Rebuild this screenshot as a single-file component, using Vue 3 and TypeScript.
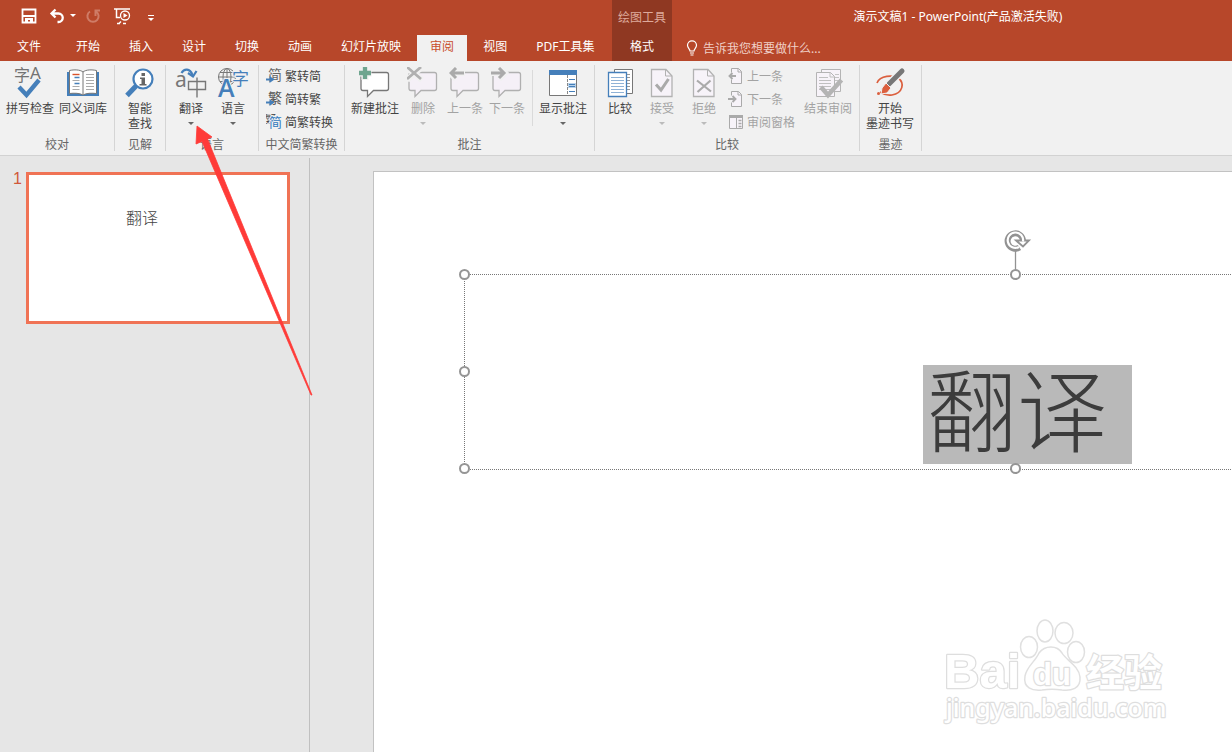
<script setup lang="ts">
import { ref } from 'vue'

interface Command {
  id: string
  lines: string[]
  icon: string
  wide?: boolean
  caret?: boolean
  disabled?: boolean
}

interface SmallCommand {
  id: string
  label: string
  icon: string
  disabled?: boolean
}

interface Group {
  id: string
  title: string
  large: Command[]
  small?: SmallCommand[]
  trailing?: Command[]
  divided?: boolean
}

const tabs: string[] = ['文件', '开始', '插入', '设计', '切换', '动画', '幻灯片放映', '审阅', '视图', 'PDF工具集']
const activeTab = ref('审阅')
const query = ref('')

const groups: Group[] = [
  {
    id: 'proofing',
    title: '校对',
    large: [
      { id: 'spelling', lines: ['拼写检查'], icon: 'spelling', wide: true },
      { id: 'thesaurus', lines: ['同义词库'], icon: 'book', wide: true },
    ],
  },
  { id: 'insights', title: '见解', large: [{ id: 'lookup', lines: ['智能', '查找'], icon: 'lookup' }] },
  {
    id: 'language',
    title: '语言',
    large: [
      { id: 'translate', lines: ['翻译'], icon: 'translate', caret: true },
      { id: 'lang', lines: ['语言'], icon: 'language', caret: true },
    ],
  },
  {
    id: 'chinese',
    title: '中文简繁转换',
    large: [],
    small: [
      { id: 'to-simplified', label: '繁转简', icon: 'simplified' },
      { id: 'to-traditional', label: '简转繁', icon: 'traditional' },
      { id: 'convert', label: '简繁转换', icon: 'convert' },
    ],
  },
  {
    id: 'comments',
    title: '批注',
    large: [
      { id: 'new-comment', lines: ['新建批注'], icon: 'comment-new', wide: true },
      { id: 'delete', lines: ['删除'], icon: 'comment-delete', caret: true, disabled: true },
      { id: 'previous', lines: ['上一条'], icon: 'comment-prev', disabled: true },
      { id: 'next', lines: ['下一条'], icon: 'comment-next', disabled: true },
    ],
    divided: true,
    trailing: [{ id: 'show', lines: ['显示批注'], icon: 'show-comments', wide: true, caret: true }],
  },
  {
    id: 'compare',
    title: '比较',
    large: [
      { id: 'compare-files', lines: ['比较'], icon: 'compare' },
      { id: 'accept', lines: ['接受'], icon: 'accept', caret: true, disabled: true },
      { id: 'reject', lines: ['拒绝'], icon: 'reject', caret: true, disabled: true },
    ],
    small: [
      { id: 'prev-change', label: '上一条', icon: 'page-prev', disabled: true },
      { id: 'next-change', label: '下一条', icon: 'page-next', disabled: true },
      { id: 'pane', label: '审阅窗格', icon: 'pane', disabled: true },
    ],
    trailing: [{ id: 'end-review', lines: ['结束审阅'], icon: 'end-review', wide: true, disabled: true }],
  },
  { id: 'ink', title: '墨迹', large: [{ id: 'start-ink', lines: ['开始', '墨迹书写'], icon: 'ink', wide: true }] },
]

const handles: string[] = ['nw', 'n', 'w', 'sw', 's']
</script>

<template>
  <div class="window">
    <svg class="sprite" aria-hidden="true">
      <defs>
        <symbol id="i-save" viewBox="0 0 16 16">
          <path d="M1.500 1.500h13v13h-13z" fill="none" stroke="#fff" stroke-width="1.800" />
          <path d="M2 8h12" stroke="#fff" stroke-width="2" />
          <path d="M4 15v-5h8v5h-3v-3h-2v3z" fill="#fff" />
        </symbol>
        <symbol id="i-undo" viewBox="0 0 16 16">
          <path d="M6.500 1.500L2.500 5.500l4 4M3 5.500h6.500a4 4 0 0 1 0 8.500h-1" fill="none" stroke="#fff" stroke-width="2.300" />
        </symbol>
        <symbol id="i-redo" viewBox="0 0 16 16">
          <path d="M5 3.500A5.600 5.600 0 1 0 11 3.500M10.500 8V2.500H15" fill="none" stroke="#cf7c67" stroke-width="2" />
        </symbol>
        <symbol id="i-show" viewBox="0 0 18 18">
          <path d="M1 2h16M3.500 2v8.500H7M4 16.500h3M8 14.500l-2 2M10 16.500h3" fill="none" stroke="#fff" stroke-width="1.500" />
          <circle cx="12" cy="8.500" r="4.500" fill="#b7472a" stroke="#fff" stroke-width="1.300" />
          <path d="M10.500 6v5l4-2.500z" fill="#fff" />
        </symbol>
        <symbol id="i-bulb" viewBox="0 0 12 16">
          <path d="M4 11C4 9 1.500 8 1.500 5.300a4.500 4.500 0 0 1 9 0C10.500 8 8 9 8 11zM4 13h4M4.500 15h3" fill="none" stroke="#fff" stroke-width="1.200" />
        </symbol>

        <symbol id="i-spelling" viewBox="0 0 32 32">
          <text x="0" y="14" font-size="16" fill="#737373" font-family="Noto Sans CJK SC, sans-serif">字</text>
          <text x="16" y="12" font-size="17" fill="#737373" font-family="Noto Sans, sans-serif">A</text>
          <path d="M5 20.500l8 8L25.500 13" fill="none" stroke="#f1f1f1" stroke-width="6" />
          <path d="M5 20l7.500 8L25 13" fill="none" stroke="#457fba" stroke-width="4.300" />
        </symbol>
        <symbol id="i-book" viewBox="0 0 32 32">
          <path d="M0 5h32v24H0z" fill="#457fba" />
          <path d="M2.500 3.500C7 2.500 13 2.500 16 5c3-2.500 9-2.500 13.500-1.500v23c-4.500-.5-10.500-.5-13.500 1.500-3-2-9-2-13.500-1.500z" fill="#fff" stroke="#777" />
          <path d="M16 5v22.500" stroke="#777" />
          <path d="M5.500 7.500h7" stroke="#d9532c" stroke-width="1.400" />
          <path d="M7.500 10.500h5M7.500 16.500h5" stroke="#457fba" stroke-width="1.300" />
          <path d="M5.500 13.500h7M5.500 19.500h7M5.500 22.500h7M19 7.500h8M19 10.500h8M19 13.500h8M19 16.500h8M19 19.500h8M19 22.500h8" stroke="#aaa" stroke-width="1.200" />
        </symbol>
        <symbol id="i-lookup" viewBox="0 0 32 32">
          <path d="M12 19L3 28.500" stroke="#457fba" stroke-width="5" />
          <circle cx="19" cy="12" r="9.500" fill="#fff" stroke="#457fba" stroke-width="2.200" />
          <path d="M17.500 6H21v3h-3.500zM16 10.500h5v6.500h1.500v1.500h-7V17h2v-5H16z" fill="#666" />
        </symbol>
        <symbol id="i-translate" viewBox="0 0 32 32">
          <text x="0" y="20" font-size="21" fill="#777" font-family="Noto Sans, sans-serif">a</text>
          <path d="M6.500 6C9 1.500 15 1 17.500 8" fill="none" stroke="#457fba" stroke-width="2.200" />
          <path d="M13 6l5 3.500L21.500 4" fill="none" stroke="#457fba" stroke-width="2.200" />
          <path d="M13.500 14.500h17v8h-17zM22 10.500v20" fill="none" stroke="#777" stroke-width="1.400" />
        </symbol>
        <symbol id="i-language" viewBox="0 0 32 32">
          <g fill="none" stroke="#777">
            <circle cx="10" cy="10" r="8.500" />
            <ellipse cx="10" cy="10" rx="4" ry="8.500" />
            <path d="M10 1.500v17M1.500 10h17M3 5.500h14M3 14.500h14" />
          </g>
          <text x="15" y="18" font-size="17" fill="#457fba" stroke="#f1f1f1" stroke-width="2" paint-order="stroke" font-family="Noto Sans CJK SC, sans-serif">字</text>
          <text x="1" y="30" font-size="25" font-weight="600" fill="#457fba" stroke="#f1f1f1" stroke-width="2" paint-order="stroke" font-family="Open Sans, sans-serif">A</text>
        </symbol>

        <symbol id="i-simplified" viewBox="0 0 16 16">
          <text x="2" y="12" font-size="14" fill="#666" font-family="Noto Sans CJK SC, sans-serif">简</text>
          <path d="M0 11.500h5" stroke="#457fba" stroke-width="2" />
          <path d="M3.500 8l5 3.500-5 3.500z" fill="#457fba" />
        </symbol>
        <symbol id="i-traditional" viewBox="0 0 16 16">
          <text x="2" y="12" font-size="14" fill="#555" font-family="Noto Sans CJK SC, sans-serif">繁</text>
          <path d="M0 11.500h5" stroke="#457fba" stroke-width="2" />
          <path d="M3.500 8l5 3.500-5 3.500z" fill="#457fba" />
        </symbol>
        <symbol id="i-convert" viewBox="0 0 16 16">
          <text x="-1" y="9" font-size="11" fill="#444" font-family="Noto Sans CJK SC, sans-serif">繁</text>
          <text x="3" y="13" font-size="13" fill="#2f78bd" stroke="#f1f1f1" stroke-width="2" paint-order="stroke" font-family="Noto Sans CJK SC, sans-serif">简</text>
        </symbol>

        <symbol id="i-comment-new" viewBox="0 0 32 32">
          <path d="M5 5.500h22.500q2 0 2 2v14q0 2-2 2H14.500l-6 6V23.500H4q-2 0-2-2V7.500q0-2 3-2z" fill="#fff" stroke="#777" stroke-width="1.300" />
          <path d="M6 0v13M-.5 6h13" stroke="#f1f1f1" stroke-width="7" />
          <path d="M6 0v12M0 6h12" stroke="#6fa58f" stroke-width="4.300" />
        </symbol>
        <symbol id="i-comment" viewBox="0 0 32 32">
          <path d="M5 4.500h22.500q2 0 2 2v14q0 2-2 2H14l-6 6V22.500H4q-2 0-2-2V6.500q0-2 3-2z" fill="#f5f0f7" stroke="#b0b0b0" stroke-width="1.300" />
        </symbol>
        <symbol id="i-comment-delete" viewBox="0 0 32 32">
          <use href="#i-comment" y="1" />
          <path d="M-1 0l16 13M15 0L0 13" stroke="#f1f1f1" stroke-width="6" />
          <path d="M0 0l14 12M14 0L0 12" stroke="#b0b0b0" stroke-width="2.700" />
        </symbol>
        <symbol id="i-comment-prev" viewBox="0 0 32 32">
          <use href="#i-comment" y="1" />
          <path d="M0 6h16M7 0L1 6l6 6" fill="none" stroke="#f1f1f1" stroke-width="6" />
          <path d="M2 6h13M7 1L2 6l5 5" fill="none" stroke="#aaa" stroke-width="3" />
        </symbol>
        <symbol id="i-comment-next" viewBox="0 0 32 32">
          <use href="#i-comment" y="1" />
          <path d="M0 6h13M8 0l6 6-6 6" fill="none" stroke="#f1f1f1" stroke-width="6" />
          <path d="M0 6h13M8 1l5 5-5 5" fill="none" stroke="#aaa" stroke-width="3" />
        </symbol>
        <symbol id="i-show-comments" viewBox="0 0 32 32">
          <path d="M2.500 4.500h27v24h-27z" fill="#fff" stroke="#777" />
          <path d="M2 3h28v5H2z" fill="#457fba" />
          <path d="M21 16h8v5h-8z" fill="#b9d2ea" />
          <path d="M20.500 8v20" stroke="#888" stroke-dasharray="3 1" />
          <path d="M22 12.500h6M22 17.500h6M22 19.500h6M22 24.500h6" stroke="#457fba" />
        </symbol>

        <symbol id="i-compare" viewBox="0 0 32 32">
          <path d="M10.500 2.500h18v24h-18z" fill="#fff" stroke="#777" />
          <path d="M22 7.500h4M22 10.500h4M22 13.500h4M22 16.500h4M22 19.500h4M22 22.500h4" stroke="#999" />
          <path d="M4.500 5.500h18v24h-18z" fill="#fff" stroke="#457fba" stroke-width="1.300" />
          <path d="M7 10.500h13M7 13.500h13M7 16.500h13M7 19.500h13M7 22.500h13M7 25.500h13" stroke="#8fb2d6" />
        </symbol>
        <symbol id="i-accept" viewBox="0 0 32 32">
          <path d="M5.500 2.500H20l6 6.500v20.500H5.500z" fill="#f7f3f9" stroke="#b2b2b2" stroke-width="1.300" />
          <path d="M19.500 2.500V9H26" fill="none" stroke="#b2b2b2" />
          <path d="M10 17.500l5 5.500 7.500-11" fill="none" stroke="#aaa" stroke-width="3" />
        </symbol>
        <symbol id="i-reject" viewBox="0 0 32 32">
          <path d="M5.500 2.500H20l6 6.500v20.500H5.500z" fill="#f7f3f9" stroke="#b2b2b2" stroke-width="1.300" />
          <path d="M19.500 2.500V9H26" fill="none" stroke="#b2b2b2" />
          <path d="M9 13.500l14 11M22.500 13.500L9.500 25" fill="none" stroke="#aaa" stroke-width="2.200" />
        </symbol>
        <symbol id="i-page-prev" viewBox="0 0 16 16">
          <path d="M3.500 4.500v-4h7l3 3v12h-10v-4" fill="#f7f3f9" stroke="#aaa" />
          <path d="M10 .5V4h3.500" fill="none" stroke="#aaa" />
          <path d="M1 8h7M4.500 5L1.500 8l3 3" fill="none" stroke="#aaa" stroke-width="1.900" />
        </symbol>
        <symbol id="i-page-next" viewBox="0 0 16 16">
          <path d="M3.500 4.500v-4h7l3 3v12h-10v-4" fill="#f7f3f9" stroke="#aaa" />
          <path d="M10 .5V4h3.500" fill="none" stroke="#aaa" />
          <path d="M0 8h7M4.500 5l3 3-3 3" fill="none" stroke="#aaa" stroke-width="1.900" />
        </symbol>
        <symbol id="i-pane" viewBox="0 0 16 16">
          <path d="M1.500 1.500h13v13h-13z" fill="#f7f3f9" stroke="#aaa" />
          <path d="M1 1h14v3H1zM8 4h1v11H8z" fill="#aaa" />
          <path d="M10.500 6.500h3M10.500 9.500h3M10.500 12.500h3" stroke="#aaa" stroke-width="1.500" />
        </symbol>
        <symbol id="i-end-review" viewBox="0 0 32 32">
          <path d="M9.500 2.500h19v22h-19z" fill="#f7f3f9" stroke="#b4b4b4" />
          <path d="M23 7.500h4M23 10.500h4M23 13.500h4" stroke="#c4c4c4" />
          <path d="M4.500 5.500h14l4 4v20h-18z" fill="#f7f3f9" stroke="#b4b4b4" />
          <path d="M18 5.500V10h4.500M7 10.500h9M7 13.500h12M7 16.500h12M7 19.500h12M7 22.500h12" fill="none" stroke="#c0c0c0" />
          <path d="M9 20l7 8 13.500-15" fill="none" stroke="#b4b4b4" stroke-width="4.500" />
        </symbol>
        <symbol id="i-ink" viewBox="0 0 32 32">
          <path d="M3 16C6 8 19 8 24 11c7 5 5 15-6 17-6 1-9-1-12-3" fill="none" stroke="#db5f3e" stroke-width="1.700" />
          <path d="M27.500 4.500L14 18" stroke="#f1f1f1" stroke-width="8" />
          <path d="M28 4L15 17" stroke="#777" stroke-width="5" stroke-linecap="round" />
          <path d="M12 16l5 5-4 5-6 1 1-6z" fill="#db5f3e" stroke="#f1f1f1" />
          <circle cx="4.500" cy="26.500" r="1.500" fill="#db5f3e" />
        </symbol>
      </defs>
    </svg>

    <header class="chrome">
      <div class="chrome-main">
        <div class="quick">
          <button class="quick-btn" aria-label="保存"><svg class="ico16"><use href="#i-save" /></svg></button>
          <button class="quick-btn undo" aria-label="撤消"><svg class="ico16"><use href="#i-undo" /></svg><span class="tri" /></button>
          <button class="quick-btn" aria-label="恢复" disabled><svg class="ico16"><use href="#i-redo" /></svg></button>
          <button class="quick-btn" aria-label="从头开始放映"><svg class="ico18"><use href="#i-show" /></svg></button>
          <button class="quick-btn more" aria-label="自定义快速访问工具栏"><span class="dash" /><span class="tri" /></button>
        </div>
        <nav class="tabs">
          <button
            v-for="tab in tabs"
            :key="tab"
            class="tab"
            :class="{ active: tab === activeTab }"
            @click="activeTab = tab"
          >{{ tab }}</button>
        </nav>
      </div>
      <div class="context">
        <span class="context-title">绘图工具</span>
        <button class="context-tab">格式</button>
      </div>
      <div class="chrome-side">
        <div class="title">演示文稿1 - PowerPoint(产品激活失败)</div>
        <label class="tell">
          <svg class="bulb" aria-hidden="true"><use href="#i-bulb" /></svg>
          <input v-model="query" type="text" aria-label="告诉我您想要做什么" placeholder="告诉我您想要做什么..." />
        </label>
      </div>
    </header>

    <div class="ribbon">
      <section v-for="g in groups" :key="g.id" class="group" :class="g.id">
        <div class="commands">
          <button v-for="c in g.large" :key="c.id" class="large" :class="{ wide: c.wide }" :disabled="c.disabled">
            <svg class="ico32" aria-hidden="true"><use :href="'#i-' + c.icon" /></svg>
            <span v-for="line in c.lines" :key="line" class="line">{{ line }}</span>
            <span v-if="c.caret" class="tri" />
          </button>
          <div v-if="g.small" class="stack">
            <button v-for="s in g.small" :key="s.id" class="small" :disabled="s.disabled">
              <svg class="ico16" aria-hidden="true"><use :href="'#i-' + s.icon" /></svg>
              <span>{{ s.label }}</span>
            </button>
          </div>
          <span v-if="g.divided" class="divider" />
          <button v-for="c in g.trailing ?? []" :key="c.id" class="large" :class="{ wide: c.wide }" :disabled="c.disabled">
            <svg class="ico32" aria-hidden="true"><use :href="'#i-' + c.icon" /></svg>
            <span v-for="line in c.lines" :key="line" class="line">{{ line }}</span>
            <span v-if="c.caret" class="tri" />
          </button>
        </div>
        <div class="group-title">{{ g.title }}</div>
      </section>
    </div>

    <main class="workspace">
      <aside class="slides">
        <span class="number">1</span>
        <button class="thumb"><span>翻译</span></button>
      </aside>
      <div class="stage">
        <div class="slide">
          <div class="placeholder">
            <span v-for="h in handles" :key="h" class="handle" :class="h" />
            <svg class="rotate" viewBox="0 0 28 44" aria-hidden="true">
              <path d="M13.500 22v20" stroke="#929292" stroke-width="1.300" />
              <path d="M21 12.500A7.700 7.700 0 1 0 17.500 19.500" fill="none" stroke="#929292" stroke-width="6" />
              <path d="M14 12.500h13l-6 6z" fill="#fff" stroke="#929292" stroke-width="1.800" />
              <path d="M21 13.500A7.700 7.700 0 1 0 17 19" fill="none" stroke="#fff" stroke-width="2.200" />
            </svg>
            <h1 class="selected">翻译</h1>
          </div>
          <svg class="watermark" viewBox="0 0 240 120" aria-label="Baidu 经验">
            <g fill="#fff" stroke="#e0e0e0" stroke-width="1.500">
              <ellipse cx="89" cy="37" rx="8.500" ry="10.500" />
              <ellipse cx="105" cy="21" rx="8" ry="11" />
              <ellipse cx="124" cy="23" rx="9" ry="10.500" />
              <ellipse cx="136" cy="42" rx="8.500" ry="10.500" />
              <path d="M99 43c6-8 18-8 23 0 4 7 17 13 18 24 1 12-9 14-18 13-7-1-13-1-20 0-10 1-19-2-17-14 2-10 10-14 14-23z" />
            </g>
            <g fill="#fff" stroke="#dedede" stroke-width="2.500" stroke-linejoin="round" paint-order="stroke" font-family="Liberation Sans, sans-serif" font-weight="700">
              <text x="4" y="78" font-size="49">Bai</text>
              <text x="93" y="75" font-size="31">du</text>
              <text x="146" y="76" font-size="38" font-family="Noto Sans CJK SC, sans-serif">经验</text>
            </g>
            <text x="6" y="107" font-size="25" fill="#fff" stroke="#dedede" stroke-width="2.500" stroke-linejoin="round" paint-order="stroke" font-family="Noto Sans, sans-serif" font-weight="500">jingyan.baidu.com</text>
          </svg>
        </div>
      </div>
    </main>

    <svg class="pointer" viewBox="0 0 120 272" aria-hidden="true">
      <path d="M3 1L18 12l-4.500 2L118 270h-1L8 16.500 2 19z" fill="#ff3b38" stroke="#ff3b38" stroke-width="0.800" />
    </svg>
  </div>
</template>

<style>
body {
  margin: 0;
  overflow: hidden;
}
</style>

<style scoped>
.window {
  position: relative;
  display: flex;
  flex-direction: column;
  height: 100vh;
  overflow: hidden;
  background: #e6e6e6;
  color: #444;
  font: 12px/15px "Noto Sans", "Noto Sans CJK SC", sans-serif;
}
.sprite {
  position: absolute;
  width: 0;
  height: 0;
}
button,
input {
  margin: 0;
  padding: 0;
  border: 0;
  background: none;
  color: inherit;
  font: inherit;
}
svg {
  display: block;
  flex: none;
  overflow: visible;
}
.ico16 { width: 16px; height: 16px; }
.ico18 { width: 18px; height: 18px; }
.ico32 { width: 32px; height: 32px; }
.tri {
  width: 0;
  height: 0;
  border: 3px solid transparent;
  border-top-color: currentColor;
  border-bottom: 0;
}

.chrome {
  display: flex;
  background: #b7472a;
  color: #fff;
}
.chrome-main {
  width: 612px;
  display: flex;
  flex-direction: column;
}
.quick {
  display: flex;
  align-items: center;
  gap: 12px;
  height: 31px;
  padding-left: 21px;
  margin-bottom: 4px;
}
.quick-btn {
  display: flex;
  align-items: center;
  gap: 5px;
}
.quick-btn.undo { margin-right: -3px; }
.quick-btn.more {
  flex-direction: column;
  gap: 2px;
  margin-left: 5px;
  padding-top: 4px;
}
.dash {
  width: 6px;
  height: 1px;
  background: #fff;
}
.tabs {
  display: flex;
  gap: 3px;
  padding-left: 4px;
}
.tab {
  height: 26px;
  padding: 0 13px 3px;
  white-space: nowrap;
}
.tab:first-child { margin-right: 6px; }
.tab.active {
  background: #f1f1f1;
  color: #c94f2e;
}
.context {
  width: 60px;
  display: flex;
  flex-direction: column;
  align-items: center;
  background: #8f3822;
}
.context-title {
  height: 35px;
  line-height: 35px;
  color: #deaa9c;
}
.context-tab {
  height: 26px;
  padding-bottom: 3px;
}
.chrome-side {
  flex: 1;
  display: flex;
  flex-direction: column;
}
.title {
  height: 35px;
  padding-left: 12px;
  line-height: 34px;
  text-align: center;
}
.tell {
  display: flex;
  align-items: center;
  gap: 5px;
  height: 26px;
  padding-left: 14px;
}
.bulb { width: 12px; height: 16px; }
.tell input {
  width: 200px;
  height: 20px;
  outline: 0;
}
.tell input::placeholder {
  color: #f0d0c7;
  opacity: 1;
}

.ribbon {
  display: flex;
  padding: 4px 0;
  border-bottom: 1px solid #d2d2d2;
  background: #f1f1f1;
}
.group {
  display: flex;
  flex-direction: column;
  border-right: 1px solid #d5d5d5;
}
.commands {
  display: flex;
  height: 72px;
  padding: 2px 4px 0;
}
.large {
  display: flex;
  flex-direction: column;
  align-items: center;
  width: 42px;
  white-space: nowrap;
}
.large.wide { width: 52px; }
.large.wide + .large { margin-left: 1px; }
.large .ico32 { margin-bottom: 2px; }
.large .tri {
  margin-top: 6px;
  color: #666;
}
.large:disabled,
.small:disabled { color: #a3a3a3; }
.large:disabled .tri { color: #bbb; }
.stack {
  padding: 0 3px;
}
.compare .stack { padding-right: 7px; }
.small {
  display: flex;
  align-items: center;
  gap: 3px;
  height: 23px;
  padding-bottom: 5px;
  white-space: nowrap;
}
.divider {
  width: 1px;
  height: 56px;
  margin: 3px 4px 0;
  background: #dadada;
}
.group-title {
  height: 12px;
  line-height: 12px;
  text-align: center;
  color: #666;
  white-space: nowrap;
}
.proofing { width: 114px; }
.chinese { width: 85px; }
.comments .commands,
.compare .commands,
.ink .commands { padding-right: 5px; }

.workspace {
  flex: 1;
  display: flex;
  min-height: 0;
}
.slides {
  display: flex;
  align-items: flex-start;
  width: 277px;
  margin-top: 2px;
  padding: 14px 19px 0 13px;
  border-right: 1px solid #c0c0c0;
}
.number {
  width: 13px;
  font: 16px/14px "Liberation Sans", sans-serif;
  color: #d0583a;
}
.thumb {
  display: flex;
  justify-content: center;
  width: 264px;
  height: 152px;
  padding: 34px 32px 0 0;
  border: 3px solid #f07355;
  background: #fff;
  font-size: 16px;
  line-height: 18px;
  font-weight: 300;
}
.stage {
  flex: 1;
  display: flex;
  padding: 15px 0 0 63px;
}
.slide {
  position: relative;
  flex: 1;
  overflow: hidden;
  border: 1px solid #c2c2c2;
  border-width: 1px 0 0 1px;
  background: #fff;
}
.placeholder {
  position: absolute;
  top: 102px;
  left: 90px;
  width: 1101px;
  height: 194px;
  border: 1px dotted #777;
}
.handle {
  position: absolute;
  z-index: 1;
  width: 7px;
  height: 7px;
  margin: -6px 0 0 -6px;
  border: 2px solid #959595;
  border-radius: 50%;
  background: #fff;
}
.handle.nw { top: 0; left: 0; }
.handle.n { top: 0; left: 50%; }
.handle.w { top: 50%; left: 0; }
.handle.sw { top: 100%; left: 0; }
.handle.s { top: 100%; left: 50%; }
.rotate {
  position: absolute;
  top: -47px;
  left: 537px;
  width: 28px;
  height: 44px;
}
.selected {
  position: absolute;
  top: 90px;
  left: 458px;
  height: 99px;
  margin: 0;
  padding: 0 25px 0 4px;
  background: #b9b9b9;
  color: #3c3c3c;
  font-size: 90px;
  line-height: 90px;
  font-weight: 300;
}
.watermark {
  position: absolute;
  top: 438px;
  left: 566px;
  width: 240px;
  height: 120px;
}
.pointer {
  position: absolute;
  top: 125px;
  left: 194px;
  width: 120px;
  height: 272px;
  pointer-events: none;
}
</style>
